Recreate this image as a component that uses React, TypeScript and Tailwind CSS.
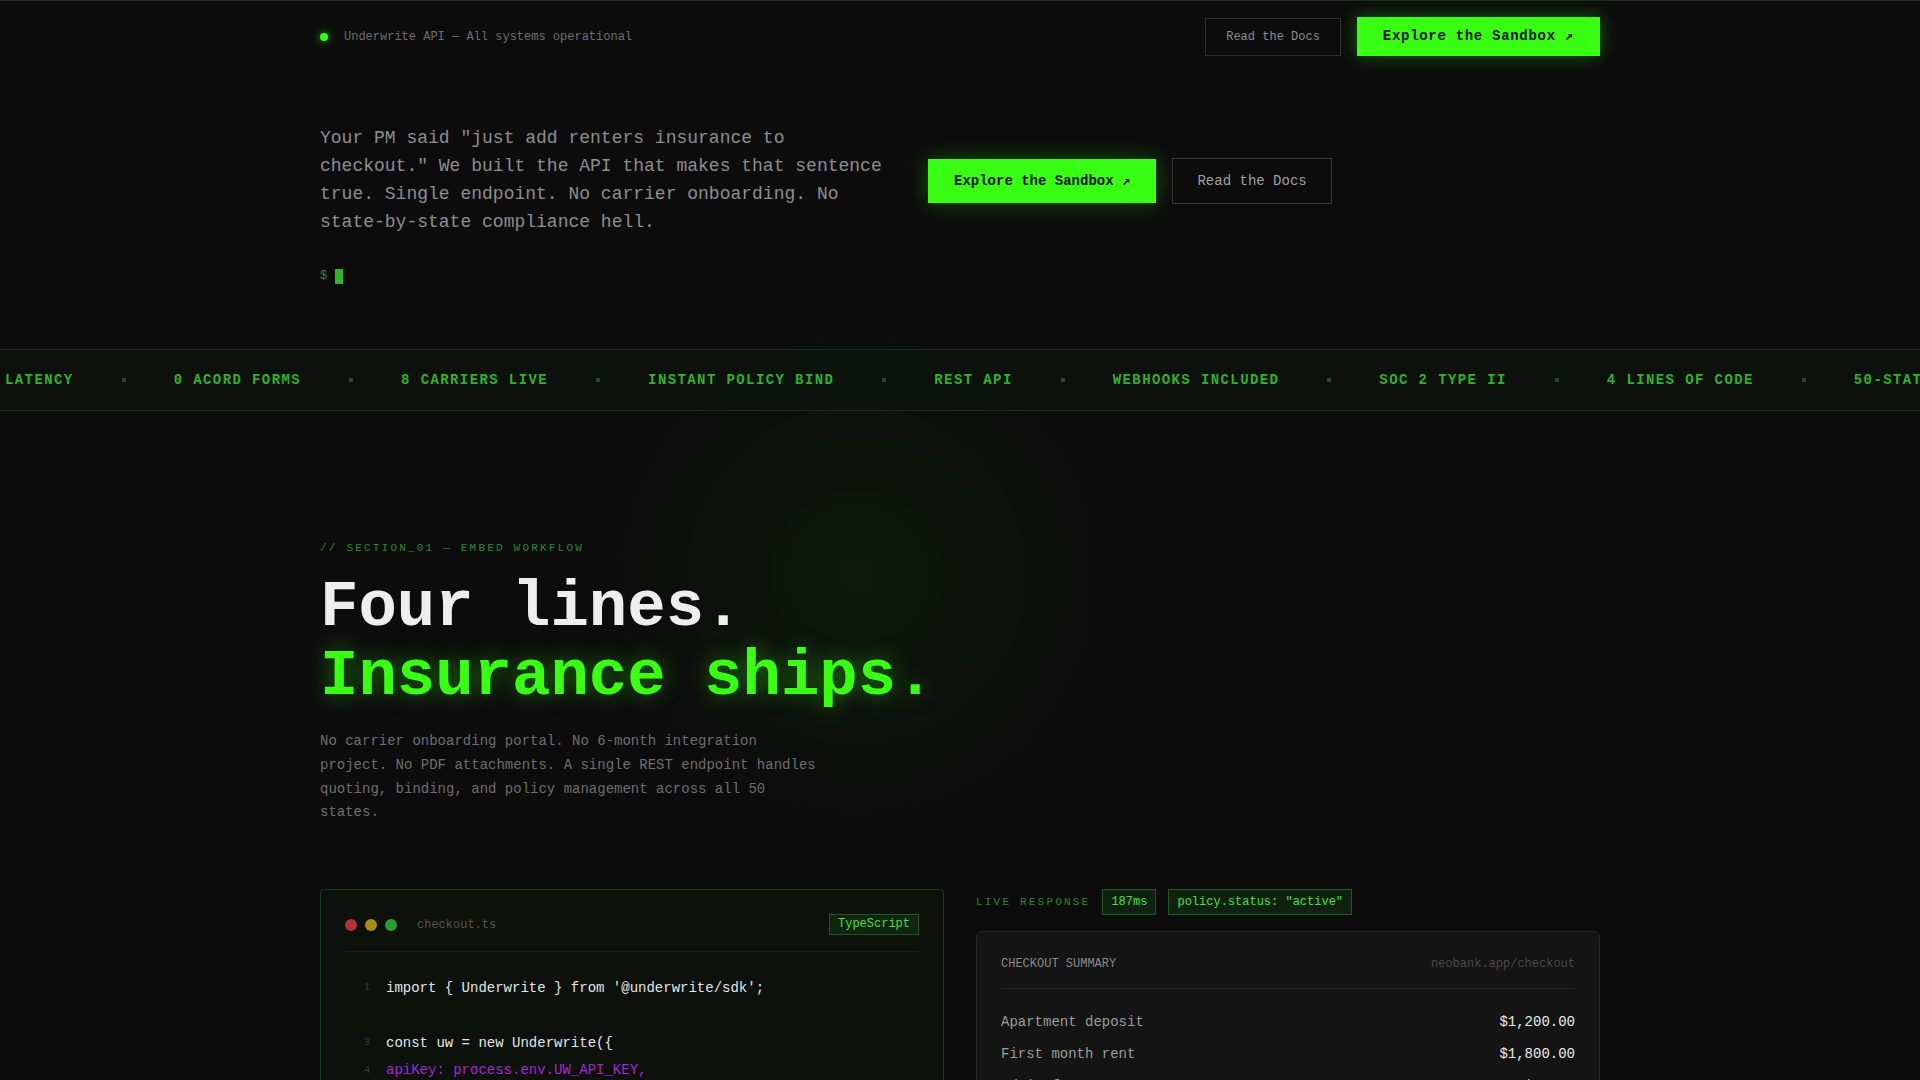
import React from 'react'

const ticker = [
  'LATENCY',
  '0 ACORD FORMS',
  '8 CARRIERS LIVE',
  'INSTANT POLICY BIND',
  'REST API',
  'WEBHOOKS INCLUDED',
  'SOC 2 TYPE II',
  '4 LINES OF CODE',
  '50-STATE COMPLIANCE',
  'SUB-200MS LATENCY',
]

type Line = { n: number; text: string; tone?: 'purple' | 'plain' }

const code: Line[] = [
  { n: 1, text: "import { Underwrite } from '@underwrite/sdk';" },
  { n: 2, text: '' },
  { n: 3, text: 'const uw = new Underwrite({' },
  { n: 4, text: 'apiKey: process.env.UW_API_KEY,', tone: 'purple' },
  { n: 5, text: '});' },
  { n: 6, text: '' },
  { n: 7, text: "const policy = await uw.policies.bind({ product: 'renters' });" },
]

const rows = [
  { label: 'Apartment deposit', value: '$1,200.00' },
  { label: 'First month rent', value: '$1,800.00' },
  { label: 'Admin fee', value: '$75.00' },
  { label: 'Renters insurance', value: '$14.00' },
]

export default function App() {
  return (
    <div className="min-h-screen bg-[#0c0c0c] font-['Liberation_Mono','DejaVu_Sans_Mono',monospace] text-[#e8e8e8] border-t border-[#183418] overflow-hidden">
      {/* Top bar */}
      <header className="mx-auto flex max-w-[1280px] items-center justify-between py-4">
        <div className="flex items-center gap-4">
          <span className="h-2 w-2 rounded-full bg-[#39ff14] shadow-[0_0_8px_rgba(57,255,20,0.7)]" />
          <span className="text-xs text-[#6f6f6f]">Underwrite API — All systems operational</span>
        </div>
        <div className="flex items-center gap-4">
          <button className="border border-[#303030] px-5 py-[10px] text-xs leading-4 text-[#8c8c8c]">Read the Docs</button>
          <button className="bg-[#39ff14] px-[26px] py-3 text-sm font-bold leading-[15px] tracking-wider text-[#0a140a] shadow-[0_0_18px_rgba(57,255,20,0.35)]">
            Explore the Sandbox ↗
          </button>
        </div>
      </header>

      {/* Hero */}
      <section className="mx-auto flex max-w-[1280px] items-start gap-[38px] pt-[52px] pb-[65px]">
        <div className="w-[570px]">
          <p className="text-lg leading-[28px] text-[#8e8e8e]">
            Your PM said "just add renters insurance to checkout." We built the API that makes that sentence true. Single
            endpoint. No carrier onboarding. No state-by-state compliance hell.
          </p>
          <div className="mt-8 flex h-4 items-center gap-2">
            <span className="text-xs text-[#2b8a2b]">$</span>
            <span className="h-[15px] w-2 bg-[#2fb52a]" />
          </div>
        </div>
        <div className="mt-[34px] flex items-center gap-4">
          <button className="bg-[#39ff14] px-[26px] py-3 text-sm font-bold leading-5 text-[#0a140a] shadow-[0_0_22px_rgba(57,255,20,0.3)]">
            Explore the Sandbox ↗
          </button>
          <button className="border border-[#3a3a3a] px-6 py-3 text-sm leading-5 text-[#a0a0a0]">Read the Docs</button>
        </div>
      </section>

      {/* Ticker */}
      <div className="overflow-hidden border-y border-[#173017] bg-[#0c110c] py-5">
        <div className="flex items-center gap-12 whitespace-nowrap pl-[5px]">
          {ticker.map((t, i) => (
            <React.Fragment key={t}>
              {i > 0 && <span className="h-1 w-1 shrink-0 bg-[#1f4f1f]" />}
              <span className="text-sm font-bold leading-5 tracking-widest text-[#33b02a]">{t}</span>
            </React.Fragment>
          ))}
        </div>
      </div>

      {/* Section 01 */}
      <section className="relative mx-auto max-w-[1280px] pt-[129px] pb-24">
        <div className="pointer-events-none absolute left-[287px] top-[-86px] h-[500px] w-[500px] rounded-full bg-[radial-gradient(circle,rgba(57,255,20,0.06)_0%,rgba(57,255,20,0.02)_40%,transparent_70%)]" />
        <div className="relative">
          <p className="text-[11px] leading-4 tracking-[0.2em] text-[#2a8a2a]">// SECTION_01 — EMBED WORKFLOW</p>
          <h1 className="mt-[18px] text-[64px] font-bold leading-[69px]">
            <span className="block text-[#eeeeee]">Four lines.</span>
            <span className="block text-[#39ff14] [text-shadow:0_0_22px_rgba(57,255,20,0.45)]">Insurance ships.</span>
          </h1>
          <p className="mt-[18px] max-w-[500px] text-sm leading-[23.8px] text-[#6e6e6e]">
            No carrier onboarding portal. No 6-month integration project. No PDF attachments. A single REST endpoint
            handles quoting, binding, and policy management across all 50 states.
          </p>

          <div className="mt-16 grid grid-cols-2 items-start gap-8">
            {/* Code panel */}
            <div className="rounded-sm border border-[#1b3a1b] bg-[#0c110c] p-6">
              <div className="flex items-center border-b border-[#1a221a] pb-4">
                <div className="flex items-center gap-2">
                  <span className="h-3 w-3 rounded-full bg-[#b33434]" />
                  <span className="h-3 w-3 rounded-full bg-[#a88a16]" />
                  <span className="h-3 w-3 rounded-full bg-[#2aa02a]" />
                </div>
                <span className="ml-5 text-xs text-[#555555]">checkout.ts</span>
                <span className="ml-auto border border-[#1f5a1f] bg-[#102410] px-2 text-xs leading-[19px] text-[#46e03a]">
                  TypeScript
                </span>
              </div>
              <div className="pt-[22px]">
                {code.map(l => (
                  <div key={l.n} className="flex h-[27.5px] items-center">
                    <span className="w-[25px] shrink-0 text-right text-[10px] text-[#3a3a3a]">{l.text ? l.n : ''}</span>
                    <span
                      className={`ml-4 whitespace-pre text-sm ${l.tone === 'purple' ? 'text-[#a526d4]' : 'text-[#e6e6e6]'}`}
                    >
                      {l.text}
                    </span>
                  </div>
                ))}
              </div>
            </div>

            {/* Live response */}
            <div>
              <div className="flex items-center gap-3">
                <span className="text-[11px] tracking-[0.2em] text-[#2a8a2a]">LIVE RESPONSE</span>
                <span className="border border-[#1f5a1f] bg-[#0f220f] px-2 py-1 text-xs leading-4 text-[#46e03a]">187ms</span>
                <span className="border border-[#1f5a1f] bg-[#0f220f] px-2 py-1 text-xs leading-4 text-[#46e03a]">
                  policy.status: "active"
                </span>
              </div>
              <div className="mt-4 rounded-md border border-[#262626] bg-[#141414] px-6 pt-6 pb-6">
                <div className="flex items-center justify-between border-b border-[#242424] pb-4">
                  <span className="text-xs leading-4 text-[#8a8a8a]">CHECKOUT SUMMARY</span>
                  <span className="text-xs leading-4 text-[#4a4a4a]">neobank.app/checkout</span>
                </div>
                <div className="pt-[17px]">
                  {rows.map(r => (
                    <div key={r.label} className="flex items-center justify-between py-1.5 text-sm leading-5">
                      <span className="text-[#9c9c9c]">{r.label}</span>
                      <span className="text-[#ededed]">{r.value}</span>
                    </div>
                  ))}
                </div>
              </div>
            </div>
          </div>
        </div>
      </section>
    </div>
  )
}
